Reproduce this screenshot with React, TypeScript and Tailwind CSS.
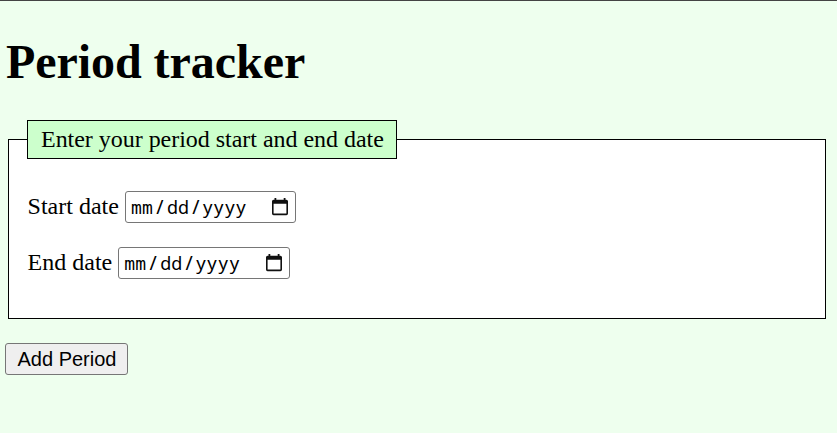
import React from "react";

function CalendarIcon() {
  return (
    <svg width="16" height="18" viewBox="0 0 16 18" className="block shrink-0">
      <path fill="#111" fillRule="evenodd" d="M2.500 0h1.800v1.700h7.400V0h1.800v1.700h.900A1.600 1.600 0 0 1 16 3.300v12.300a1.600 1.600 0 0 1-1.600 1.600H1.600A1.600 1.600 0 0 1 0 15.600V3.300a1.600 1.600 0 0 1 1.600-1.600h.900zM1.600 5.800v9.800h12.800V5.800z" />
    </svg>
  );
}

function Slash() {
  return <span className="w-[12px] text-center text-[19.500px]">/</span>;
}

function DateField({ label, width }: { label: string; width: string }) {
  return (
    <div className="flex h-8 items-center gap-[6px] pl-[0.6px]">
      <label className="-mt-[2px] whitespace-pre text-[24px] leading-[28px]">{label}</label>
      <div className={`flex h-8 items-center justify-between rounded-[3px] border border-[#767676] bg-white pl-[4px] pr-[7px] ${width}`}>
        <div className="flex h-[28px] items-baseline font-['Noto_Sans',sans-serif] text-[18.500px] leading-[28px]">
          <span className="px-px font-['DejaVu_Sans_Mono',monospace] text-[18px] tracking-[0.16px]">mm</span>
          <Slash />
          <span className="w-6 px-px text-[18px]">dd</span>
          <Slash />
          <span className="pl-px tracking-[1.700px]">yyyy</span>
        </div>
        <CalendarIcon />
      </div>
    </div>
  );
}

export default function App() {
  return (
    <main className="h-[433px] w-full overflow-hidden border-t border-[#444] bg-[#eeffee] font-['Liberation_Serif',serif] text-black">
      <h1 className="ml-[6px] mt-[33px] text-[48px] font-bold leading-[55px] tracking-[-0.05px]">Period tracker</h1>
      <fieldset className="ml-[8px] mr-[11px] mt-[31px] h-[199px] border border-black bg-white pl-[18px]">
        <legend className="h-[39px] w-[370px] whitespace-nowrap border border-black bg-[#ccffcc] pl-[13px] text-[24px] leading-[37px] tracking-[-0.03px]">Enter your period start and end date</legend>
        <div className="mt-8 flex flex-col gap-6">
          <DateField label="Start date" width="w-[171px]" />
          <DateField label="End date" width="w-[172px]" />
        </div>
      </fieldset>
      <button className="ml-[5px] mt-6 h-8 w-[123px] rounded-[3px] border border-[#767676] bg-[#efefef] pl-[1px] font-['Liberation_Sans',sans-serif] text-[20px] leading-[30px]">Add Period</button>
    </main>
  );
}
